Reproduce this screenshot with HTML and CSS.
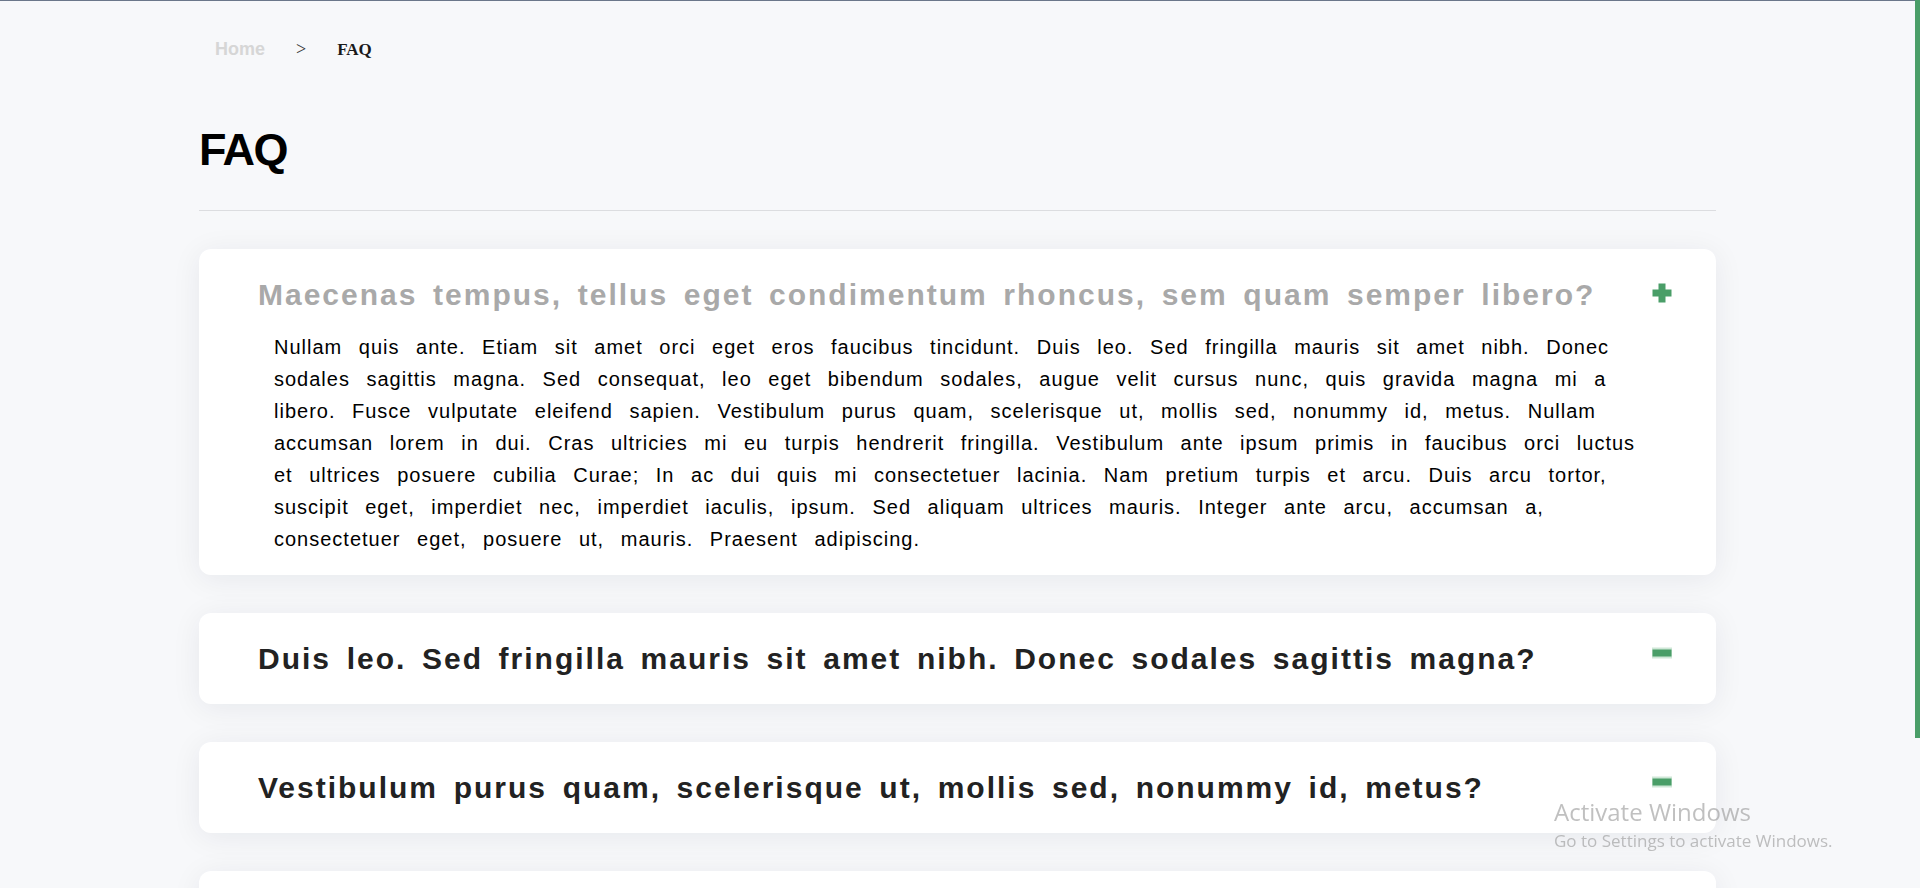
FILE: index.html
```html
<!DOCTYPE html>
<html lang="en">
<head>
<meta charset="utf-8">
<title>FAQ</title>
<link rel="stylesheet" href="styles.css">
</head>
<body>
<div class="page">
  <nav class="crumbs">
    <a class="crumb-home" href="#">Home</a>
    <span class="crumb-sep">&gt;</span>
    <span class="crumb-current">FAQ</span>
  </nav>
  <h1 class="title">FAQ</h1>
  <hr class="divider">
  <div class="faq-list">
    <div class="faq-card open">
      <div class="faq-q">
        <h3 class="faq-text">Maecenas tempus, tellus eget condimentum rhoncus, sem quam semper libero?</h3>
        <svg class="faq-icon icon-plus" width="20" height="20" viewBox="0 0 20 20"><rect x="6.5" y="0.5" width="7" height="19" fill="#4a9e68"/><rect x="0.5" y="6.5" width="19" height="7" fill="#4a9e68"/></svg>
      </div>
      <p class="faq-a">Nullam quis ante. Etiam sit amet orci eget eros faucibus tincidunt. Duis leo. Sed fringilla mauris sit amet nibh. Donec sodales sagittis magna. Sed consequat, leo eget bibendum sodales, augue velit cursus nunc, quis gravida magna mi a libero. Fusce vulputate eleifend sapien. Vestibulum purus quam, scelerisque ut, mollis sed, nonummy id, metus. Nullam accumsan lorem in dui. Cras ultricies mi eu turpis hendrerit fringilla. Vestibulum ante ipsum primis in faucibus orci luctus et ultrices posuere cubilia Curae; In ac dui quis mi consectetuer lacinia. Nam pretium turpis et arcu. Duis arcu tortor, suscipit eget, imperdiet nec, imperdiet iaculis, ipsum. Sed aliquam ultrices mauris. Integer ante arcu, accumsan a, consectetuer eget, posuere ut, mauris. Praesent adipiscing.</p>
    </div>
    <div class="faq-card">
      <div class="faq-q">
        <h3 class="faq-text">Duis leo. Sed fringilla mauris sit amet nibh. Donec sodales sagittis magna?</h3>
        <svg class="faq-icon icon-minus" width="20" height="20" viewBox="0 0 20 20"><rect x="0" y="4.5" width="20" height="11" fill="#cfe7d7"/><rect x="0.5" y="6.5" width="19" height="7" fill="#4a9e68"/></svg>
      </div>
    </div>
    <div class="faq-card">
      <div class="faq-q">
        <h3 class="faq-text">Vestibulum purus quam, scelerisque ut, mollis sed, nonummy id, metus?</h3>
        <svg class="faq-icon icon-minus" width="20" height="20" viewBox="0 0 20 20"><rect x="0" y="4.5" width="20" height="11" fill="#cfe7d7"/><rect x="0.5" y="6.5" width="19" height="7" fill="#4a9e68"/></svg>
      </div>
    </div>
    <div class="faq-card">
      <div class="faq-q">
        <h3 class="faq-text">Nullam accumsan lorem in dui. Cras ultricies mi eu turpis hendrerit fringilla?</h3>
        <svg class="faq-icon icon-minus" width="20" height="20" viewBox="0 0 20 20"><rect x="0" y="4.5" width="20" height="11" fill="#cfe7d7"/><rect x="0.5" y="6.5" width="19" height="7" fill="#4a9e68"/></svg>
      </div>
    </div>
  </div>
</div>
<div class="scroll-thumb"></div>
<div class="watermark">
  <div class="wm-title">Activate Windows</div>
  <div class="wm-sub">Go to Settings to activate Windows.</div>
</div>
</body>
</html>
```
FILE: styles.css
```css
html, body {
  margin: 0;
  padding: 0;
  overflow: hidden;
}
body {
  background: #f7f8fa;
  border-top: 1px solid #6b778a;
  font-family: "Liberation Sans", Arial, sans-serif;
  min-height: 887px;
}
.page {
  width: 1517px;
  margin-left: 199px;
}
.crumbs {
  padding-top: 36px;
  padding-left: 16px;
  height: 24px;
  line-height: 24px;
  display: flex;
  align-items: baseline;
}
.crumb-home {
  font-family: "Liberation Sans", Arial, sans-serif;
  font-weight: bold;
  font-size: 18px;
  color: #d6d6d6;
  text-decoration: none;
}
.crumb-sep {
  font-family: "Liberation Serif", "Times New Roman", serif;
  font-size: 18px;
  color: #333;
  margin-left: 31px;
}
.crumb-current {
  font-family: "Liberation Serif", "Times New Roman", serif;
  font-weight: bold;
  font-size: 17px;
  color: #1a1a1a;
  margin-left: 31px;
}
.title {
  margin: 62px 0 0 0;
  font-family: "Liberation Sans", Arial, sans-serif;
  font-weight: 700;
  font-size: 45px;
  line-height: 54px;
  letter-spacing: -1.5px;
  color: #000;
}
.divider {
  margin: 33px 0 0 0;
  border: 0;
  border-top: 1px solid #dcdde0;
  height: 0;
}
.faq-list {
  margin-top: 38px;
  display: flex;
  flex-direction: column;
  gap: 38px;
}
.faq-card {
  background: #fff;
  border-radius: 12px;
  box-shadow: 0 4px 30px rgba(20, 30, 50, 0.07);
  padding: 28px 0 27px 0;
}
.faq-card.open {
  padding-bottom: 20px;
}
.faq-q {
  display: flex;
  align-items: flex-start;
  padding-left: 59px;
  padding-right: 44px;
}
.faq-text {
  flex: 1;
  margin: 0;
  font-size: 30px;
  line-height: 36px;
  font-weight: bold;
  letter-spacing: 2px;
  word-spacing: 5.3px;
  color: #222;
}
.open .faq-text {
  color: #a9a9a9;
}
.faq-icon {
  flex: none;
  display: block;
}
.icon-plus {
  margin-top: 6px;
}
.icon-minus {
  margin-top: 2px;
}
.faq-a {
  margin: 18px 0 0 0;
  padding: 0 76px 0 75px;
  font-size: 20px;
  line-height: 32px;
  letter-spacing: 1px;
  word-spacing: 10px;
  color: #000;
}
.scroll-thumb {
  position: fixed;
  top: 0;
  right: 0;
  width: 5px;
  height: 738px;
  background: #4a9e68;
}
.watermark {
  position: fixed;
  left: 1554px;
  top: 796px;
  font-family: "Open Sans", "Noto Sans", sans-serif;
  color: rgba(150, 150, 150, 0.6);
}
.wm-title {
  font-size: 24px;
  line-height: 32px;
}
.wm-sub {
  font-size: 17px;
  line-height: 26px;
}
```
